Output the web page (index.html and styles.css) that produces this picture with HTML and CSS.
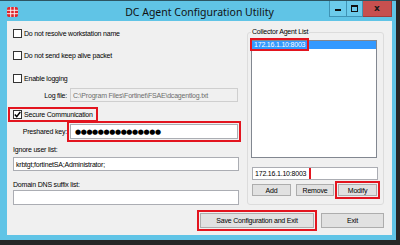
FILE: index.html
```html
<!DOCTYPE html>
<html>
<head>
  <meta charset="utf-8">
  <title>DC Agent Configuration Utility</title>
  <link rel="stylesheet" href="styles.css">
</head>
<body>
<div class="window">
  <div class="titlebar">
    <div class="tb-left">
      <svg class="appicon" width="11" height="10" viewBox="0 0 11 10">
        <rect x="0" y="0" width="11" height="10" rx="2" fill="#e0242b"/>
        <path d="M3.7 0V10M7.3 0V10M0 3.3H11M0 6.7H11" stroke="#fff" stroke-width="0.9"/>
      </svg>
    </div>
    <span class="title">DC Agent Configuration Utility</span>
    <div class="tb-right">
      <div class="capbtn min"><span></span></div>
      <div class="capbtn max"><span></span></div>
      <div class="capbtn close">x</div>
    </div>
  </div>

  <div class="client">
    <div class="top">
      <div class="left">
        <label class="check r1"><span class="box"></span>Do not resolve workstation name</label>
        <label class="check r2"><span class="box"></span>Do not send keep alive packet</label>
        <label class="check r3"><span class="box"></span>Enable logging</label>
        <div class="field logrow">
          <span class="flabel">Log file:</span>
          <div class="textbox disabled">C:\Program Files\Fortinet\FSAE\dcagentlog.txt</div>
        </div>
        <label class="check secure"><span class="box"><svg width="7" height="7" viewBox="0 0 7 7"><path d="M0.8 3.6L2.7 5.6L6.3 1" fill="none" stroke="#000" stroke-width="1.5"/></svg></span>Secure Communication</label>
        <div class="field keyrow">
          <span class="flabel">Preshared key:</span>
          <div class="textbox key marked">●●●●●●●●●●●●●●●</div>
        </div>
        <div class="caption ignore-label">Ignore user list:</div>
        <div class="textbox wide ignore">krbtgt;fortinetSA;Administrator;</div>
        <div class="caption dns-label">Domain DNS suffix list:</div>
        <div class="textbox wide dns"></div>
      </div>

      <fieldset class="group">
        <legend>Collector Agent List</legend>
        <div class="listbox">
          <div class="item selected"><span class="mark">172.16.1.10:8003</span></div>
        </div>
        <div class="textbox ip"><span class="mark">172.16.1.10:8003</span></div>
        <div class="btnrow">
          <div class="btn add">Add</div>
          <div class="btn remove">Remove</div>
          <div class="btn modify marked">Modify</div>
        </div>
      </fieldset>
    </div>

    <div class="bottom">
      <div class="btn save marked">Save Configuration and Exit</div>
      <div class="btn exit">Exit</div>
    </div>
  </div>
</div>
</body>
</html>
```

FILE: styles.css
```css
html {font-family: "Liberation Sans", Arial, sans-serif; font-size: 7px; letter-spacing: -0.2px; color: #000;}
body {margin: 0; width: 400px; height: 245px; overflow: hidden; background: #262626;}

.window {width: 396px; height: 240px; box-sizing: border-box; border-top: 1px solid #2d5563;
  background: #60c4e6; padding: 0 4px 5px 7px; display: flex; flex-direction: column;}

/* title bar */
.titlebar {height: 20px; flex: none; display: grid; grid-template-columns: 1fr auto 1fr;}
.tb-left {display: flex; align-items: flex-start;}
.appicon {margin-top: 6px; display: block;}
.title {font-family: "Noto Sans", sans-serif; font-size: 10.5px; letter-spacing: 0; line-height: 20px; padding-top: 1px; color: #111;}
.tb-right {display: flex; justify-content: flex-end; align-items: flex-start;}
.capbtn {height: 16px; box-sizing: border-box; border: 1px solid #3f93b5; border-top: none;
  display: flex; align-items: center; justify-content: center;}
.capbtn.min {width: 18px; background: #6ccbeb;}
.capbtn.min span {width: 6px; height: 2px; background: #111; margin-top: 3px;}
.capbtn.max {width: 16px; border-left: none; background: #6ccbeb;}
.capbtn.max span {width: 5px; height: 4px; border: 1px solid #111; border-top-width: 2px;}
.capbtn.close {width: 29px; background: #c7504f; border-color: #a03c3b; border-left: none;
  font-family: "DejaVu Sans", sans-serif; font-weight: bold; font-size: 9px; letter-spacing: 0; color: #1a1a1a; line-height: 1;}

/* client area */
.client {flex: 1; background: #f0f0f0; padding: 7px 8px 0 6px; display: flex; flex-direction: column;}
.top {display: flex; gap: 8px;}
.left {width: 226px; display: flex; flex-direction: column; align-items: flex-start;}

.check {display: flex; align-items: center; gap: 2px; height: 11px; white-space: nowrap;}
.box {width: 9px; height: 9px; box-sizing: border-box; border: 1px solid #333; background: #fff;
  display: flex; align-items: center; justify-content: center;}
.box svg {display: block;}
.r2 {margin-top: 11px;}
.r3 {margin-top: 12px;}
.secure {margin-top: 7px; margin-left: -3px; padding: 0 3px; outline: 2px solid #e3151f;}

.field {display: flex; align-items: center; gap: 3px;}
.flabel {width: 54px; text-align: right; white-space: nowrap;}
.logrow {margin-top: 4px;}
.keyrow {margin-top: 4px;}

.textbox {box-sizing: border-box; height: 14px; border: 1px solid #abadb3; background: #fff;
  display: flex; align-items: center; padding: 0 2px; white-space: nowrap; overflow: hidden;}
.textbox.disabled {width: 168px; background: #f0f0f0; border-color: #cfcfcf; color: #6d6d6d;}
.textbox.key {width: 168px; height: 15px; font-family: "DejaVu Sans", sans-serif; font-size: 7px; padding-left: 4px; letter-spacing: -0.4px;}
.textbox.wide {width: 226px;}
.textbox.dns {height: 15px;}
.marked {outline: 2px solid #e3151f; outline-offset: 1px;}

.caption {line-height: 8px;}
.ignore-label {margin-top: 7px;}
.ignore {margin-top: 3px;}
.dns-label {margin-top: 10px;}
.dns {margin-top: 1px;}

/* collector agent list */
.group {margin: 0; width: 137px; box-sizing: border-box; padding: 0 6px 6px 3px;
  border: 1px solid #dcdcdc; border-radius: 3px; min-width: 0;}
.group legend {padding: 0 1px; line-height: 8px; white-space: nowrap;}
.listbox {margin-top: 4px; height: 118px; box-sizing: border-box; border: 1px solid #828790; background: #fff;}
.item {height: 8px; line-height: 8px; padding-left: 1px; white-space: nowrap;}
.item.selected {background: #3399ff; color: #fff;}
.mark {outline: 2px solid #e3151f; outline-offset: 1px; padding: 0 1px;}
.textbox.ip {margin: 9px 0 0 1px; width: 126px; height: 13px; padding-left: 1px;}
.textbox.ip .mark {outline-offset: 2px;}

.btnrow {display: flex; margin: 4px 0 0 1px;}
.btn {box-sizing: border-box; height: 12px; border: 1px solid #adadad; background: #e1e1e1;
  display: flex; align-items: center; justify-content: center; white-space: nowrap;}
.btn.add {width: 39px;}
.btn.remove {width: 38px; margin-left: 5px;}
.btn.modify {width: 39px; margin-left: 4px;}

.bottom {display: flex; justify-content: flex-end; gap: 7px; margin-top: 8px;}
.btn.save {width: 114px; height: 15px;}
.btn.exit {width: 63px; height: 15px;}
```
